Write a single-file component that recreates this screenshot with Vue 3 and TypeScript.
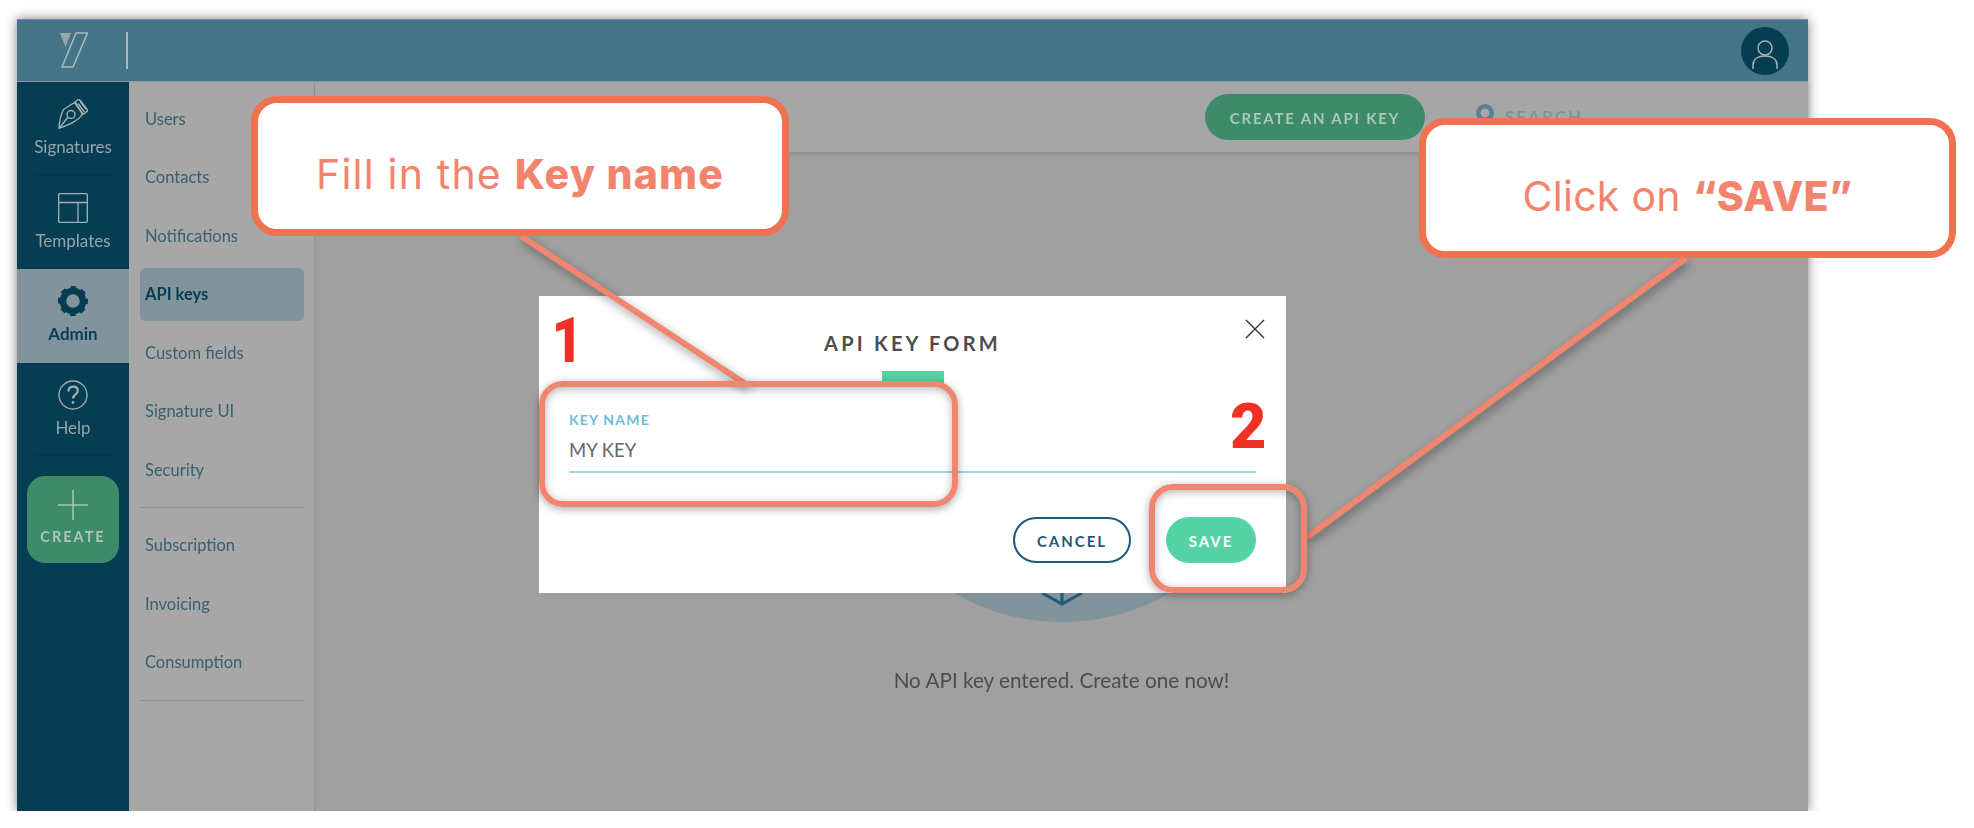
<script setup lang="ts">
interface NavItem {
  label: string
  icon: string
  active?: boolean
}

const navItems: NavItem[] = [
  { label: 'Signatures', icon: 'pen' },
  { label: 'Templates', icon: 'layout' },
  { label: 'Admin', icon: 'gear', active: true },
  { label: 'Help', icon: 'help' }
]

const settingsLinks = ['Users', 'Contacts', 'Notifications', 'API keys', 'Custom fields', 'Signature UI', 'Security']
const billingLinks = ['Subscription', 'Invoicing', 'Consumption']
</script>

<template>
  <div class="page">
    <div class="app">
      <header class="topbar">
        <svg class="logo" viewBox="0 0 30 38" width="30" height="38">
          <path d="M1 1h11L6.500 15z" fill="#98a5a8" />
          <path d="M17 1h11.500L14 35H3z" fill="none" stroke="#a9b8be" stroke-width="1.600" stroke-linejoin="round" />
        </svg>
        <span class="topbar-sep"></span>
        <span class="avatar">
          <svg viewBox="0 0 48 48" width="48" height="48" fill="none" stroke="#a7b3b5" stroke-width="1.500">
            <ellipse cx="24" cy="21" rx="7" ry="7" />
            <path d="M12 42v-4c0-6 5-9 12-9s12 3 12 9v4" />
          </svg>
        </span>
      </header>

      <div class="body">
        <nav class="nav">
          <a v-for="item in navItems" :key="item.label" class="nav-item" :class="{ active: item.active }">
            <svg v-if="item.icon === 'pen'" class="nav-icon" viewBox="0 0 30 30" width="30" height="30" fill="none" stroke="currentColor" stroke-width="1.400" stroke-linejoin="round">
              <path d="M1 29.300C1.500 22 3 15 5.500 10.500L16.500 3.500 24.500 14.500C22.500 19 17 24 1 29.300z" />
              <path d="m17 3 4-3 9 11.500-5 4z" />
              <path d="m20 4.500 6.500 8.500M22.500 3 28 10" />
              <circle cx="13" cy="15.500" r="4" />
              <path d="m1.500 29 8.500-11" />
            </svg>
            <svg v-else-if="item.icon === 'layout'" class="nav-icon" viewBox="0 0 30 30" width="30" height="30" fill="none" stroke="currentColor" stroke-width="1.300">
              <rect x="0.700" y="0.700" width="28.600" height="28.600" rx="1" />
              <path d="M1 9.500h28M20 9.500v20" />
            </svg>
            <svg v-else-if="item.icon === 'gear'" class="nav-icon" viewBox="0 0 30 30" width="30" height="30" fill="none" stroke="currentColor">
              <circle cx="15" cy="15" r="10" stroke-width="6.500" />
              <circle cx="15" cy="15" r="12.800" stroke-width="4.400" stroke-dasharray="5.500 4.555" stroke-dashoffset="2.750" />
            </svg>
            <svg v-else class="nav-icon" viewBox="0 0 30 30" width="30" height="30" fill="none" stroke="currentColor" stroke-width="1.300">
              <circle cx="15" cy="15" r="14" />
              <path d="M10.500 11.500c0-3 2-4.800 4.700-4.800 2.800 0 4.600 1.700 4.600 4 0 3.800-4.800 3.600-4.800 7.800" stroke-width="2.200" />
              <circle cx="15" cy="22.500" r="1.400" fill="currentColor" stroke="none" />
            </svg>
            <span>{{ item.label }}</span>
          </a>
          <a class="create">
            <svg viewBox="0 0 30 30" width="30" height="30" stroke="#a9c8b8" stroke-width="1.500">
              <path d="M15 0v30M0 15h30" />
            </svg>
            <span>CREATE</span>
          </a>
        </nav>

        <aside class="subnav">
          <a v-for="link in settingsLinks" :key="link" class="sub-link" :class="{ current: link === 'API keys' }">{{ link }}</a>
          <hr class="sub-sep first" />
          <a v-for="link in billingLinks" :key="link" class="sub-link">{{ link }}</a>
          <hr class="sub-sep" />
        </aside>

        <main class="main">
          <div class="toolbar">
            <button class="create-key">CREATE AN API KEY</button>
            <div class="search">
              <svg viewBox="0 0 18 26" width="18" height="26" fill="none" stroke="#5d8090" stroke-width="4.500">
                <circle cx="9" cy="9" r="6.750" />
              </svg>
              <span>SEARCH</span>
            </div>
          </div>
          <div class="empty">
            <svg class="empty-art" viewBox="0 0 344 264" width="344" height="264">
              <ellipse cx="172" cy="132" rx="172" ry="132" fill="#82949b" />
              <path d="M152 235l20 11 20-11M172 232v14" fill="none" stroke="#1f5a78" stroke-width="3" />
            </svg>
            <p>No API key entered. Create one now!</p>
          </div>
        </main>
      </div>
    </div>

    <section class="modal">
      <button class="close" aria-label="Close">
        <svg viewBox="0 0 20 20" width="20" height="20" stroke="#333" stroke-width="1.400">
          <path d="M1 1l18 18M19 1 1 19" />
        </svg>
      </button>
      <h2>API KEY FORM</h2>
      <span class="title-mark"></span>
      <label class="field">
        <span class="field-label">KEY NAME</span>
        <span class="field-value">MY KEY</span>
      </label>
      <div class="actions">
        <button class="btn cancel">CANCEL</button>
        <button class="btn save">SAVE</button>
      </div>
    </section>

    <!-- annotations painted over the screenshot -->
    <svg class="leaders" viewBox="0 0 1974 828" width="1974" height="828">
      <path d="M521 236 747 385M1686 258 1307 537" stroke="#f08570" stroke-width="6" fill="none" />
    </svg>
    <div class="mark mark-field"></div>
    <div class="mark mark-save"></div>
    <span class="step step-one">1</span>
    <span class="step step-two">2</span>
    <div class="callout callout-name">Fill in the&nbsp;<strong>Key name</strong></div>
    <div class="callout callout-save">Click on&nbsp;<strong>“SAVE”</strong></div>
  </div>
</template>

<style scoped>
.page {
  position: relative;
  width: 1974px;
  height: 828px;
  overflow: hidden;
  background: #fff;
  font-family: Lato, "Open Sans", sans-serif;
}

.app {
  display: flex;
  flex-direction: column;
  width: 1791px;
  height: 792px;
  margin-left: 17px;
  padding-top: 19px;
  box-sizing: content-box;
  filter: drop-shadow(0 0 6px rgba(0, 0, 0, 0.5));
  clip-path: inset(0 -12px 0 -12px);
}

.topbar {
  display: flex;
  align-items: center;
  flex: 0 0 63px;
  box-sizing: border-box;
  padding-left: 42px;
  padding-right: 19px;
  background: #447586;
  border-top: 1px solid #8f8a45;
  border-bottom: 1px solid #8a9a9e;
}

.logo {
  margin-top: 1px;
}

.topbar-sep {
  width: 2px;
  height: 37px;
  margin-left: 37px;
  background: #a9b8be;
}

.avatar {
  display: flex;
  width: 48px;
  height: 48px;
  margin-left: auto;
  border-radius: 50%;
  background: #063d52;
}

.body {
  display: flex;
  flex: 1;
  min-height: 0;
}

.nav {
  display: flex;
  flex-direction: column;
  flex: 0 0 112px;
  background: #063d52;
}

.nav-item {
  display: flex;
  flex-direction: column;
  align-items: center;
  gap: 7px;
  box-sizing: border-box;
  height: 93.500px;
  padding-top: 17px;
  color: #93a6ab;
  font-size: 17px;
  position: relative;
}

.nav-icon {
  color: #a3b0b3;
}

.nav-item.active .nav-icon {
  color: #063d52;
}

.nav-item:not(.active)::after {
  content: "";
  position: absolute;
  left: 16px;
  right: 16px;
  bottom: 0;
  height: 1px;
  background: #0a3547;
}

.nav-item:nth-child(2)::after {
  display: none;
}

.nav-item.active {
  background: #82949b;
  color: #063d52;
  font-weight: 700;
}

.create {
  display: flex;
  flex-direction: column;
  align-items: center;
  gap: 8px;
  box-sizing: border-box;
  height: 87px;
  margin: 20px 10px 0;
  padding-top: 14px;
  border-radius: 18px;
  background: #3d8b6b;
  color: #a9c8b8;
  font-size: 14.500px;
  font-weight: 700;
  letter-spacing: 2px;
}

.subnav {
  display: flex;
  flex-direction: column;
  flex: 0 0 186px;
  box-sizing: border-box;
  padding: 10.500px 10px 0 11px;
  background: #a7a7a7;
  border-right: 1px solid #969696;
}

.sub-link {
  display: flex;
  align-items: center;
  flex: 0 0 53px;
  margin-bottom: 5.500px;
  padding-left: 5px;
  padding-bottom: 1px;
  box-sizing: border-box;
  border-radius: 5px;
  color: #38606f;
  font-size: 16.500px;
}

.sub-link.current {
  background: #82949b;
  color: #063d52;
  font-weight: 700;
}

.sub-sep {
  width: 100%;
  height: 1px;
  margin: 5px 0 2px;
  border: 0;
  background: #909090;
}

.sub-sep.first {
  margin-bottom: 11px;
}

.main {
  display: flex;
  flex-direction: column;
  flex: 1;
  background: #a0a0a0;
}

.toolbar {
  display: flex;
  align-items: center;
  flex: 0 0 70px;
  box-sizing: border-box;
  padding-left: 890px;
  background: #a6a6a6;
  box-shadow: 0 2px 4px rgba(0, 0, 0, 0.12);
}

.create-key {
  width: 220px;
  height: 46px;
  border: 0;
  padding-top: 2px;
  border-radius: 23px;
  background: #3d8b6b;
  color: #a9c8b8;
  font: 700 15px Lato, sans-serif;
  letter-spacing: 1.800px;
}

.search {
  display: flex;
  align-items: flex-start;
  gap: 11px;
  align-self: flex-start;
  margin-left: 51px;
  margin-top: 22px;
  color: #8e8e8e;
  font-size: 17px;
  font-weight: 700;
  line-height: 26px;
  letter-spacing: 2px;
}

.empty {
  display: flex;
  flex-direction: column;
  align-items: center;
  padding-top: 206px;
}

.empty-art {
  display: block;
}

.empty p {
  margin: 45px 0 0;
  color: #4d4d4d;
  font-size: 20.700px;
  line-height: 26px;
}

.modal {
  position: absolute;
  left: 539px;
  top: 296px;
  display: flex;
  flex-direction: column;
  align-items: center;
  box-sizing: border-box;
  width: 747px;
  height: 297px;
  padding: 35px 30px 30px;
  background: #fff;
}

.close {
  position: absolute;
  top: 23px;
  right: 21px;
  display: flex;
  padding: 0;
  border: 0;
  background: none;
}

.modal h2 {
  margin: 0;
  color: #4d4d4d;
  font-size: 20px;
  font-weight: 700;
  line-height: 24px;
  letter-spacing: 3.200px;
}

.title-mark {
  width: 62px;
  height: 16px;
  margin-top: 16px;
  background: #56d3a6;
}

.field {
  display: flex;
  flex-direction: column;
  align-self: stretch;
  height: 70px;
  box-sizing: border-box;
  margin-top: 17px;
  padding-top: 6px;
  border-bottom: 2px solid #a3d5e6;
}

.field-label {
  color: #6fbcd6;
  font-size: 14px;
  font-weight: 700;
  line-height: 20px;
  letter-spacing: 1.200px;
}

.field-value {
  margin-top: 8px;
  color: #666;
  font-size: 18.500px;
  line-height: 24px;
}

.actions {
  display: flex;
  justify-content: flex-end;
  align-self: stretch;
  gap: 35px;
  margin-top: 44px;
}

.btn {
  height: 46px;
  padding-top: 3px;
  border-radius: 23px;
  font: 700 15px Lato, sans-serif;
  letter-spacing: 2px;
}

.cancel {
  width: 118px;
  border: 2.500px solid #1f5a78;
  background: #fff;
  color: #1f5a78;
}

.save {
  width: 90px;
  border: 0;
  background: #56d3a6;
  color: #fff;
}

.leaders {
  position: absolute;
  left: 0;
  top: 0;
  filter: drop-shadow(2px 4px 5px rgba(0, 0, 0, 0.4));
}

.mark {
  position: absolute;
  box-sizing: border-box;
  border: 6px solid #f08570;
  border-radius: 24px;
  box-shadow: 0 2px 8px rgba(0, 0, 0, 0.35), inset 0 2px 8px rgba(0, 0, 0, 0.3);
}

.mark-field {
  left: 539px;
  top: 381px;
  width: 419px;
  height: 126px;
}

.mark-save {
  left: 1149px;
  top: 484px;
  width: 158px;
  height: 109px;
}

.step {
  position: absolute;
  color: #ee3124;
  font-family: Roboto, sans-serif;
  font-size: 63px;
  font-weight: 900;
  line-height: 63px;
}

.step-one {
  left: 549px;
  top: 309px;
  transform: scaleX(0.85);
}

.step-two {
  left: 1230px;
  top: 395px;
}

.callout {
  position: absolute;
  display: flex;
  align-items: center;
  justify-content: center;
  box-sizing: border-box;
  height: 140px;
  padding-top: 16px;
  border: 7px solid #f07250;
  border-radius: 26px;
  background: #fff;
  color: #f2846e;
  font-family: Inter, sans-serif;
  font-size: 41px;
}

.callout strong {
  font-weight: 800;
}

.callout-name {
  left: 251px;
  top: 96px;
  width: 538px;
  letter-spacing: 1.200px;
}

.callout-save {
  left: 1419px;
  top: 118px;
  width: 537px;
  letter-spacing: 0.300px;
}
</style>

<style>
html,
body {
  margin: 0;
  background: #fff;
}
</style>
